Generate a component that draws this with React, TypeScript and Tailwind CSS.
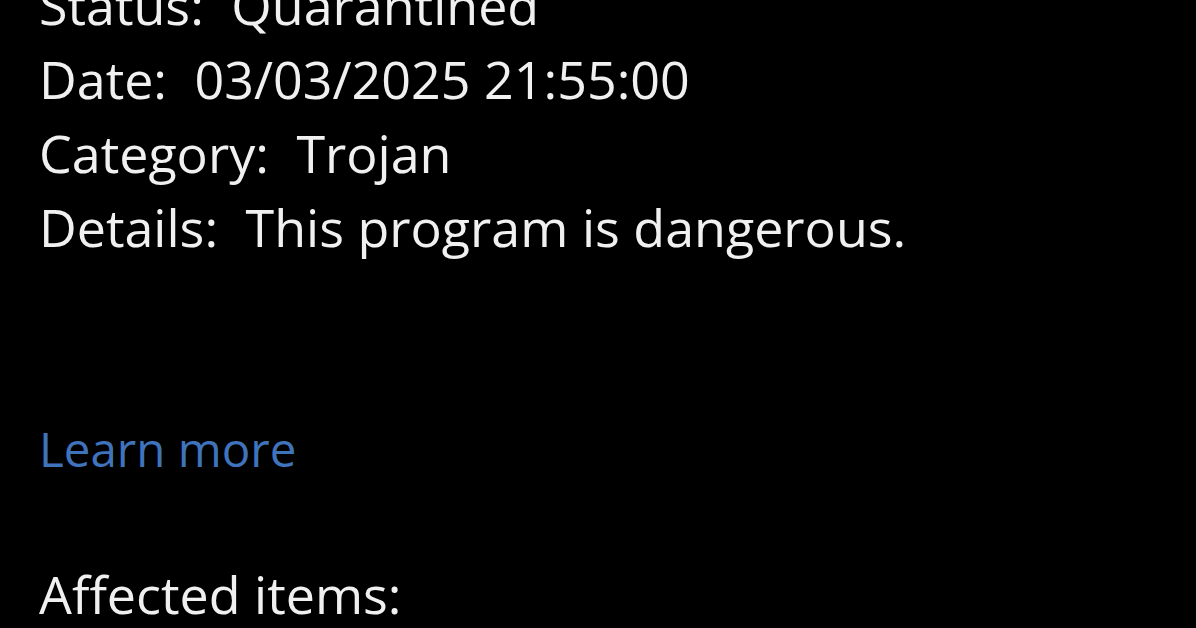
const details = [
  { label: "Status:", value: "Quarantined" },
  { label: "Date:", value: "03/03/2025 21:55:00" },
  { label: "Category:", value: "Trojan" },
  { label: "Details:", value: "This program is dangerous." },
];

export default function App() {
  return (
    <div className="h-[628px] w-[1196px] overflow-hidden bg-black pl-[39px] font-['Open_Sans',sans-serif] text-[#f0f0f0]">
      <div className="-mt-[32px] text-[52px] leading-[74px]">
        {details.map((d) => (
          <p key={d.label} className="whitespace-nowrap">
            <span className="mr-[14px]">{d.label}</span> {d.value}
          </p>
        ))}
      </div>
      <p className="mt-[155px] text-[47.5px] leading-[60px] text-[#3f74bd]">Learn more</p>
      <p className="mt-[78px] text-[52px] leading-[74px]">Affected items:</p>
    </div>
  );
}
